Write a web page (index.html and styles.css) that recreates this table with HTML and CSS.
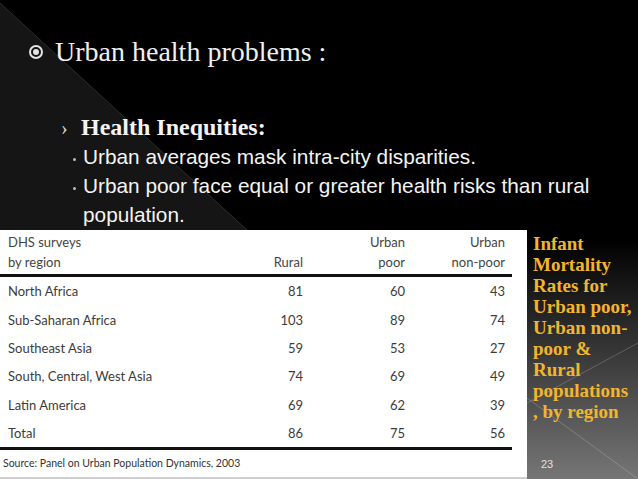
FILE: index.html
```html
<!DOCTYPE html>
<html>
<head>
<meta charset="utf-8">
<link rel="stylesheet" href="styles.css">
</head>
<body>
<div class="slide">
  <svg class="bg" width="638" height="479" viewBox="0 0 638 479">
    <defs>
      <linearGradient id="g" x1="0" y1="0" x2="0" y2="1">
        <stop offset="0" stop-color="#000"/>
        <stop offset="0.5" stop-color="#000"/>
        <stop offset="1" stop-color="#767676"/>
      </linearGradient>
    </defs>
    <rect x="0" y="0" width="638" height="479" fill="url(#g)"/>
    <polygon points="0,3 247,230 0,230" fill="#151515"/>
    <line x1="0" y1="3" x2="247" y2="230" stroke="#2c2c2c" stroke-width="1"/>
    <line x1="638" y1="343" x2="527" y2="403" stroke="rgba(255,255,255,0.2)" stroke-width="1"/>
    <line x1="527" y1="398" x2="638" y2="479" stroke="rgba(255,255,255,0.2)" stroke-width="1"/>
  </svg>

  <div class="top">
    <div class="l1"><span class="b1"></span><span>Urban health problems :</span></div>
    <div class="l2"><span class="b2">›</span><span>Health Inequities:</span></div>
    <ul class="l3">
      <li>Urban averages mask intra-city disparities.</li>
      <li>Urban poor face equal or greater health risks than rural population.</li>
    </ul>
  </div>

  <div class="lower">
    <div class="panel">
      <div class="thead">
        <div class="row hrow">
          <span class="lbl">DHS surveys<br>by region</span>
          <span class="num">Rural</span>
          <span class="num">Urban<br>poor</span>
          <span class="num">Urban<br>non-poor</span>
        </div>
      </div>
      <div class="tbody">
        <div class="row"><span class="lbl">North Africa</span><span class="num">81</span><span class="num">60</span><span class="num">43</span></div>
        <div class="row"><span class="lbl">Sub-Saharan Africa</span><span class="num">103</span><span class="num">89</span><span class="num">74</span></div>
        <div class="row"><span class="lbl">Southeast Asia</span><span class="num">59</span><span class="num">53</span><span class="num">27</span></div>
        <div class="row"><span class="lbl">South, Central, West Asia</span><span class="num">74</span><span class="num">69</span><span class="num">49</span></div>
        <div class="row"><span class="lbl">Latin America</span><span class="num">69</span><span class="num">62</span><span class="num">39</span></div>
        <div class="row"><span class="lbl">Total</span><span class="num">86</span><span class="num">75</span><span class="num">56</span></div>
      </div>
      <div class="source">Source: Panel on Urban Population Dynamics, 2003</div>
    </div>
    <div class="side">
      <p class="cap">Infant<br>Mortality<br>Rates for<br>Urban poor,<br>Urban non-<br>poor &amp;<br>Rural<br>populations<br>, by region</p>
      <div class="page">23</div>
    </div>
  </div>
</div>
</body>
</html>
```

FILE: styles.css
```css
body {
  margin: 0;
  background: #000;
}

.slide {
  position: relative;
  width: 638px;
  height: 479px;
  overflow: hidden;
  display: flex;
  flex-direction: column;
  color: #f2f2f2;
}

.bg {
  position: absolute;
  left: 0;
  top: 0;
  z-index: 0;
}

.top {
  position: relative;
  z-index: 1;
  height: 230px;
  box-sizing: border-box;
  padding-top: 37px;
  flex: none;
}

.l1 {
  display: flex;
  align-items: center;
  padding-left: 29px;
  font: 28px/30px "Liberation Serif", serif;
  color: #f0f0f0;
}

.b1 {
  width: 14px;
  height: 14px;
  border-radius: 50%;
  border: 2px solid #e4e4e4;
  box-sizing: border-box;
  display: flex;
  align-items: center;
  justify-content: center;
  margin-right: 12px;
  flex: none;
}

.b1::after {
  content: "";
  width: 6px;
  height: 6px;
  border-radius: 50%;
  background: #e4e4e4;
}

.l2 {
  display: flex;
  align-items: baseline;
  margin-top: 46px;
  padding-left: 61px;
  font: bold 24px/28px "Liberation Serif", serif;
  color: #f4f4f4;
}

.b2 {
  font-weight: normal;
  font-size: 20px;
  width: 20px;
  color: #dcdcdc;
}

.l3 {
  list-style: none;
  margin: 0;
  padding: 0 0 0 73px;
  width: 530px;
  font: 20.8px/29px "Liberation Sans", Arial, sans-serif;
  color: #f4f4f4;
}

.l3 li {
  display: flex;
}

.l3 li::before {
  content: "";
  flex: none;
  width: 3px;
  height: 3px;
  border-radius: 50%;
  background: #bdbdbd;
  margin-top: 16px;
  margin-right: 7px;
}

.lower {
  position: relative;
  z-index: 1;
  display: flex;
  height: 249px;
}

.panel {
  width: 527px;
  flex: none;
  background: #fff;
  box-sizing: border-box;
  border-bottom: 2px solid #cfcfcf;
  display: flex;
  flex-direction: column;
  font-family: Lato, "Liberation Sans", sans-serif;
  color: #3c3c3c;
}

.thead,
.tbody {
  width: 512px;
}

.thead {
  border-bottom: 3px solid #111;
  padding-top: 2px;
  padding-bottom: 2px;
}

.tbody {
  border-bottom: 3px solid #111;
}

.row {
  display: grid;
  grid-template-columns: 215px 80px 102px 100px;
  padding-left: 8px;
  height: 28.4px;
  align-items: center;
  font-size: 13px;
}

.hrow {
  height: auto;
  line-height: 20px;
  align-items: end;
  color: #444;
}

.num {
  text-align: right;
}

.source {
  padding-left: 3px;
  font-size: 10.5px;
  line-height: 27px;
  color: #333;
}

.side {
  flex: 1;
  display: flex;
  flex-direction: column;
  padding-left: 6px;
}

.cap {
  margin: 0;
  padding-top: 3px;
  font: bold 19px/21px "Liberation Serif", serif;
  color: #f2b52e;
  white-space: nowrap;
}

.page {
  margin-top: auto;
  padding-left: 8px;
  padding-bottom: 8px;
  font: 11px/14px "Liberation Sans", sans-serif;
  color: #e0e0e0;
}
```
